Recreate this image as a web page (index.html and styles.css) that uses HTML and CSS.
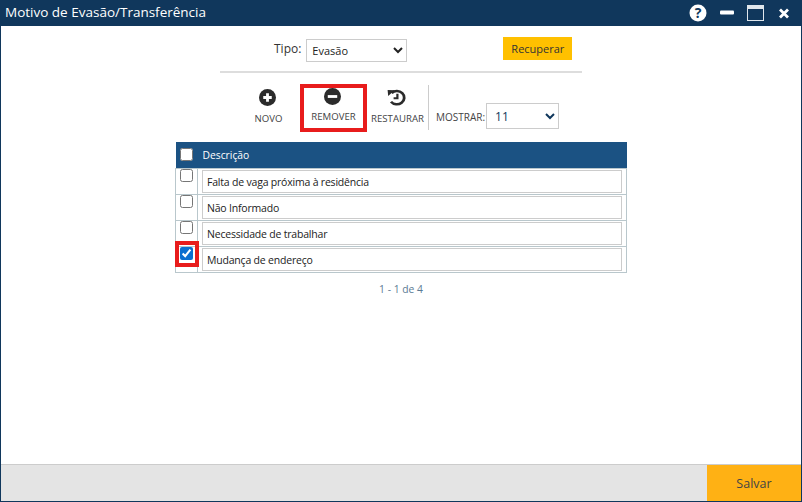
FILE: index.html
```html
<!DOCTYPE html>
<html>
<head>
    <meta charset="UTF-8">
    <title>Motivo de Evasão/Transferência</title>
    <link rel="stylesheet" href="styles.css">
</head>
<body>
    <div class="window">
        <div class="title-bar">
            <span class="title">Motivo de Evasão/Transferência</span>
            <div class="title-icons">
                <svg class="icon-help" width="18" height="18" viewBox="0 0 18 18">
                    <circle cx="9" cy="9" r="8.5" fill="#fff"/>
                    <text x="9" y="13.5" text-anchor="middle" class="help-mark">?</text>
                </svg>
                <svg class="icon-min" width="14" height="6" viewBox="0 0 14 6">
                    <rect y="0.5" width="14" height="4" rx="1" fill="#fff"/>
                </svg>
                <svg class="icon-max" width="17" height="16" viewBox="0 0 17 16">
                    <rect x="0.5" y="0.5" width="16" height="15" fill="none" stroke="#dfe6ec"/>
                    <rect x="1" y="1" width="15" height="3" fill="#dfe6ec"/>
                </svg>
                <svg class="icon-close" width="12" height="11" viewBox="0 0 12 11">
                    <path d="M2 1.5 L10 9.5 M10 1.5 L2 9.5" stroke="#fff" stroke-width="2.8"/>
                </svg>
            </div>
        </div>

        <div class="content">
            <div class="filter-row">
                <label class="filter-label">Tipo:</label>
                <select class="filter-select">
                    <option>Evasão</option>
                </select>
                <button class="btn-recover">Recuperar</button>
            </div>

            <div class="divider"></div>

            <div class="toolbar">
                <div class="tool tool-new">
                    <svg width="17" height="17" viewBox="0 0 18 18">
                        <circle cx="9" cy="9" r="9" fill="#2b2b2b"/>
                        <path d="M9 4.5 V13.5 M4.5 9 H13.5" stroke="#fff" stroke-width="3"/>
                    </svg>
                    <span>NOVO</span>
                </div>
                <div class="tool tool-remove">
                    <svg width="17" height="17" viewBox="0 0 18 18">
                        <circle cx="9" cy="9" r="9" fill="#2b2b2b"/>
                        <path d="M4 9 H14" stroke="#fff" stroke-width="3"/>
                    </svg>
                    <span>REMOVER</span>
                </div>
                <div class="tool tool-restore">
                    <svg width="19" height="17" viewBox="0 0 19 18" preserveAspectRatio="none">
                        <path d="M4.6 4.2 A7.4 7 0 1 1 4 13.5" fill="none" stroke="#2b2b2b" stroke-width="2.8"/>
                        <path d="M0.6 1 L7.6 1.4 L1.2 7.4 Z" fill="#2b2b2b"/>
                        <path d="M10.4 5 V9.8 H6.6" fill="none" stroke="#2b2b2b" stroke-width="2.2"/>
                    </svg>
                    <span>RESTAURAR</span>
                </div>
                <div class="tool-sep"></div>
                <label class="show-label">MOSTRAR:</label>
                <select class="show-select">
                    <option>11</option>
                </select>
            </div>

            <table class="grid">
                <thead>
                    <tr>
                        <th class="col-check"><input type="checkbox"></th>
                        <th class="col-desc">Descrição</th>
                    </tr>
                </thead>
                <tbody>
                    <tr>
                        <td class="col-check"><input type="checkbox"></td>
                        <td class="col-desc"><div class="desc-box">Falta de vaga próxima à residência</div></td>
                    </tr>
                    <tr>
                        <td class="col-check"><input type="checkbox"></td>
                        <td class="col-desc"><div class="desc-box">Não Informado</div></td>
                    </tr>
                    <tr>
                        <td class="col-check"><input type="checkbox"></td>
                        <td class="col-desc"><div class="desc-box">Necessidade de trabalhar</div></td>
                    </tr>
                    <tr>
                        <td class="col-check marked"><input type="checkbox" checked></td>
                        <td class="col-desc"><div class="desc-box">Mudança de endereço</div></td>
                    </tr>
                </tbody>
            </table>

            <div class="pager">1 - 1 de 4</div>
        </div>

        <div class="footer">
            <button class="btn-save">Salvar</button>
        </div>
    </div>
</body>
</html>
```

FILE: styles.css
```css
* {
    margin: 0;
    padding: 0;
    box-sizing: border-box;
}

html, body {
    height: 100%;
    overflow: hidden;
    background-color: white;
}

body {
    font-family: "Open Sans", "Noto Sans", sans-serif;
    color: #333;
}

.window {
    height: 100%;
    display: flex;
    flex-direction: column;
    border: 1px solid #10375c;
    border-top: 0;
}

.title-bar {
    height: 26px;
    flex-shrink: 0;
    display: flex;
    align-items: center;
    justify-content: space-between;
    background-color: #10375c;
    padding: 0 11px 0 4px;
}

.title {
    color: white;
    font-size: 13.5px;
    margin-top: -2px;
}

.title-icons {
    display: flex;
    align-items: center;
    gap: 13px;
}

.icon-close {
    margin-left: 1px;
}

.help-mark {
    font-family: "Open Sans", sans-serif;
    font-size: 14px;
    font-weight: 700;
    fill: #10375c;
}

.content {
    flex: 1;
    display: flex;
    flex-direction: column;
    align-items: center;
}

.filter-row {
    width: 362px;
    display: flex;
    align-items: center;
    height: 45px;
    padding-left: 54px;
}

.filter-label {
    font-size: 12px;
    margin-right: 5px;
}

.filter-select {
    width: 101px;
    height: 23px;
    margin-top: 3px;
    font-family: inherit;
    font-size: 11px;
    color: #222;
    background-color: white;
    border: 1px solid #ccc;
    padding-left: 1px;
}

.btn-recover {
    width: 69px;
    height: 23px;
    margin-left: 96px;
    font-family: inherit;
    font-size: 11px;
    color: #333;
    background-color: #ffc000;
    border: none;
}

.divider {
    width: 362px;
    height: 2px;
    background-color: #ddd;
}

.toolbar {
    width: 362px;
    height: 69px;
    display: flex;
    align-items: center;
    padding-left: 20px;
}

.tool {
    display: flex;
    flex-direction: column;
    align-items: center;
    font-size: 9.6px;
    color: #444;
    gap: 6px;
}

.tool-new {
    width: 57px;
    margin-top: -2px;
}

.tool-new svg,
.tool-restore svg {
    margin-left: -3px;
}

.tool-remove {
    width: 67px;
    height: 48px;
    border: 4px solid #e81c1c;
    margin-left: 3px;
    gap: 5px;
}

.tool-remove svg {
    margin-left: -3px;
}

.tool-restore {
    width: 61px;
    margin-top: -2px;
}

.tool-sep {
    width: 1px;
    height: 45px;
    background-color: #ccc;
    margin-right: 7px;
}

.show-label {
    font-size: 10px;
    color: #444;
    margin-top: 18px;
    margin-right: 1px;
}

.show-select {
    width: 73px;
    height: 26px;
    margin-top: 17px;
    font-family: inherit;
    font-size: 12px;
    color: #10375c;
    background-color: white;
    border: 1px solid #ccc;
    padding-left: 4px;
}

.grid {
    width: 452px;
    border-collapse: collapse;
    table-layout: fixed;
}

.grid th {
    height: 26px;
    background-color: #1b5283;
    color: white;
    font-size: 10.3px;
    font-weight: 400;
    text-align: left;
}

.grid td {
    height: 26px;
    border: 1px solid #b9c7cc;
    vertical-align: middle;
}

.col-check {
    width: 22px;
    position: relative;
}

.grid input {
    display: block;
    width: 13px;
    height: 13px;
    margin-left: 4px;
    accent-color: #0b6fd0;
}

.grid td input {
    margin-top: -12px;
}

.grid td.marked input {
    margin-top: -11px;
}

.marked::after {
    content: "";
    box-sizing: border-box;
    position: absolute;
    left: -1px;
    top: -6px;
    width: 24px;
    height: 26px;
    border: 4px solid #e81c1c;
}

.grid th.col-desc {
    padding-left: 5px;
}

.grid td.col-desc {
    padding: 0 4px;
}

.desc-box {
    height: 23px;
    line-height: 23px;
    border: 1px solid #ccc;
    padding-left: 4px;
    font-size: 10.5px;
    letter-spacing: -0.2px;
    color: #222;
}

.pager {
    margin-top: 9px;
    font-size: 10.3px;
    color: #5a7a94;
}

.footer {
    height: 37px;
    flex-shrink: 0;
    display: flex;
    justify-content: flex-end;
    background-color: #e4e4e4;
    border-top: 1px solid #ccc;
}

.btn-save {
    width: 94px;
    padding-top: 1px;
    font-family: inherit;
    font-size: 12.5px;
    color: #444;
    background-color: #ffb114;
    border: none;
}
```
